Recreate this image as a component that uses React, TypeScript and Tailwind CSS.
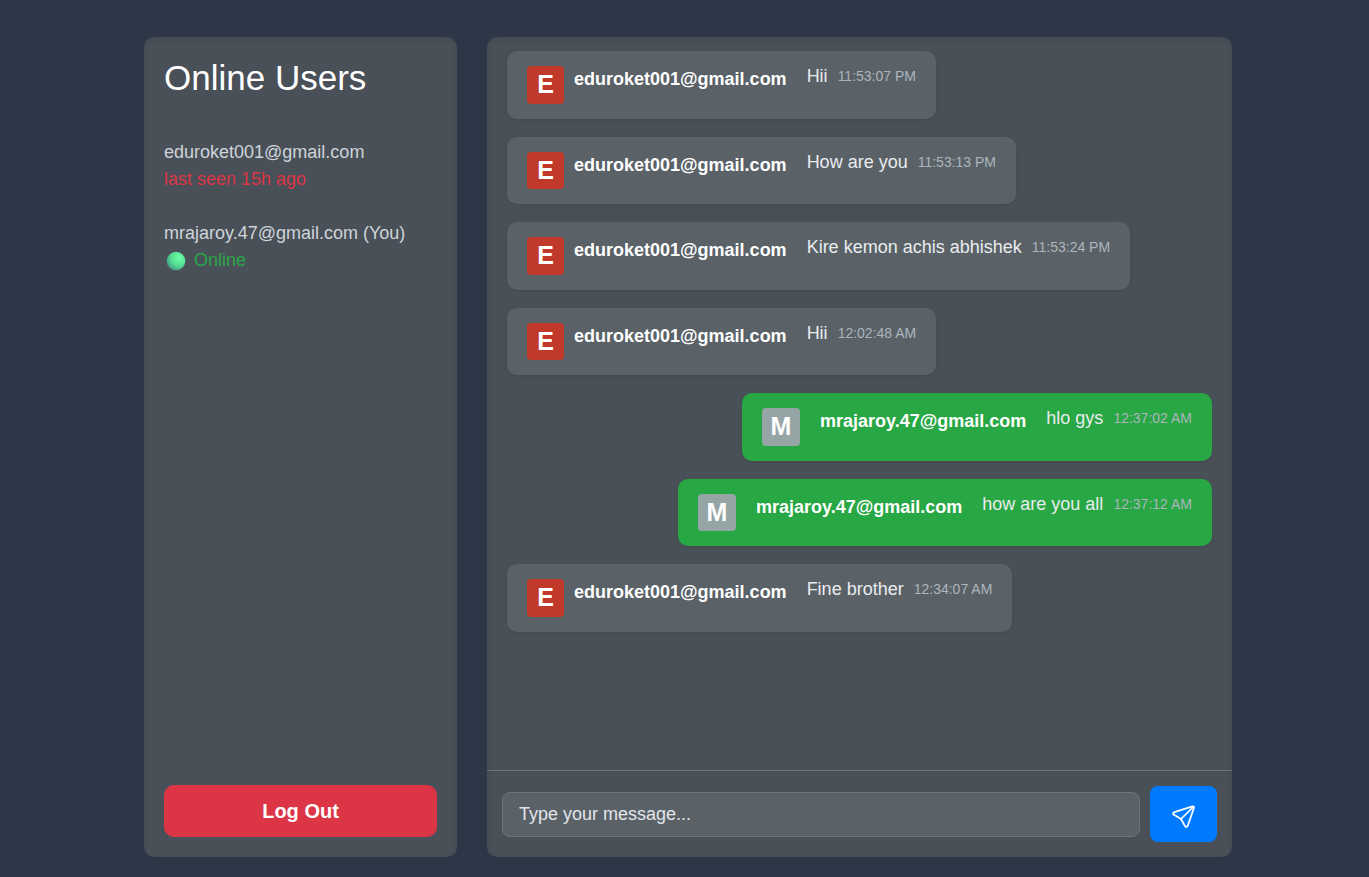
import React from "react";

type Message = { from: string; text: string; time: string; own?: boolean };

const EDU = "eduroket001@gmail.com";
const MRA = "mrajaroy.47@gmail.com";

const messages: Message[] = [
  { from: EDU, text: "Hii", time: "11:53:07 PM" },
  { from: EDU, text: "How are you", time: "11:53:13 PM" },
  { from: EDU, text: "Kire kemon achis abhishek", time: "11:53:24 PM" },
  { from: EDU, text: "Hii", time: "12:02:48 AM" },
  { from: MRA, text: "hlo gys", time: "12:37:02 AM", own: true },
  { from: MRA, text: "how are you all", time: "12:37:12 AM", own: true },
  { from: EDU, text: "Fine brother", time: "12:34:07 AM" },
];

function Bubble({ message }: { message: Message }) {
  const { from, text, time, own } = message;
  return (
    <li
      className={
        "flex max-w-full items-start rounded-[10px] px-5 py-[15px] shadow-[0_1px_3px_rgba(0,0,0,0.1)] " +
        (own ? "self-end bg-[#28a745]" : "self-start bg-[#5a6268]")
      }
    >
      <span
        className={
          "shrink-0 rounded-[4px] text-center text-[25px] leading-normal font-bold text-white " +
          (own ? "mr-5 w-[38px] bg-[#95a5a6]" : "mr-[10px] w-[37px] bg-[#c0392b]")
        }
      >
        {from[0].toUpperCase()}
      </span>
      <strong className="mr-5 leading-[27px] text-white">{from}</strong>
      <p className="flex items-center gap-[10px] leading-[21px] text-[#e9ecef]">
        {text}
        <time className="text-[14px] text-[#adb5bd]">{time}</time>
      </p>
    </li>
  );
}

function OnlineDot() {
  return (
    <svg viewBox="0 0 20 20" className="ml-[2px] size-5" aria-hidden="true">
      <defs>
        <radialGradient id="dot" cx="0.68" cy="0.32" r="0.8">
          <stop offset="0" stopColor="#6dffa4" />
          <stop offset="0.55" stopColor="#55dc92" />
          <stop offset="1" stopColor="#3f8f83" />
        </radialGradient>
      </defs>
      <circle cx="10" cy="10" r="9.3" fill="url(#dot)" />
    </svg>
  );
}

function SendIcon() {
  return (
    <svg
      viewBox="0 0 28 28"
      className="mt-1 size-[27px]"
      fill="none"
      stroke="currentColor"
      strokeWidth="1.8"
      strokeLinecap="round"
      strokeLinejoin="round"
      aria-hidden="true"
    >
      <path d="M23.2 3.5 4.6 9.4c-1.6.5-1.8 2.2-.4 2.9l7.2 4.3 4.1 7.3c.7 1.3 2.4 1.1 2.9-.4L24.8 5.1c.4-1.2-.4-2-1.6-1.6Z" />
      <path d="M11.4 16.6 24.2 3.9" />
    </svg>
  );
}

export default function App() {
  return (
    <div className="flex min-h-screen bg-[#2d3748] pt-[37px] pb-5 font-['Liberation_Sans',Arial,sans-serif] text-[18px] leading-[27px]">
      <div className="mx-auto flex w-full max-w-[1095px] gap-[30px] pl-[7px]">
        <aside className="flex w-[313px] shrink-0 flex-col rounded-[10px] bg-[#495057] p-5 shadow-[inset_0_2px_5px_rgba(0,0,0,0.1)]">
          <h2 className="mb-10 text-[35px] leading-[42px] text-white">Online Users</h2>
          <ul className="flex flex-col gap-[27px] text-[#ced4da]">
            <li>
              {EDU}
              <div className="text-[#dc3545]">last seen 15h ago</div>
            </li>
            <li>
              {MRA} (You)
              <div className="flex items-center gap-2 text-[#28a745]">
                <OnlineDot />
                Online
              </div>
            </li>
          </ul>
          <button
            type="button"
            className="mt-auto h-[52px] w-full rounded-[10px] bg-[#dc3545] text-[20px] font-bold text-white"
          >
            Log Out
          </button>
        </aside>

        <main className="flex min-w-0 flex-1 flex-col rounded-[10px] bg-[#495057] shadow-[inset_0_2px_5px_rgba(0,0,0,0.1)]">
          <ul className="flex flex-1 flex-col gap-[18px] px-5 pt-[14px]">
            {messages.map((message) => (
              <Bubble key={message.time} message={message} />
            ))}
          </ul>
          <form
            className="flex items-center gap-[10px] border-t border-[#6c757d] p-[15px]"
            onSubmit={(event) => event.preventDefault()}
          >
            <input
              type="text"
              aria-label="Message"
              placeholder="Type your message..."
              className="h-[45px] min-w-0 flex-1 rounded-[8px] border border-[#6c757d] bg-[#5a6268] px-4 text-[#f8f9fa] placeholder:text-[#e2e6ea]"
            />
            <button
              type="submit"
              aria-label="Send"
              className="flex h-14 w-[67px] items-center justify-center rounded-[8px] bg-[#007bff] text-white"
            >
              <SendIcon />
            </button>
          </form>
        </main>
      </div>
    </div>
  );
}
